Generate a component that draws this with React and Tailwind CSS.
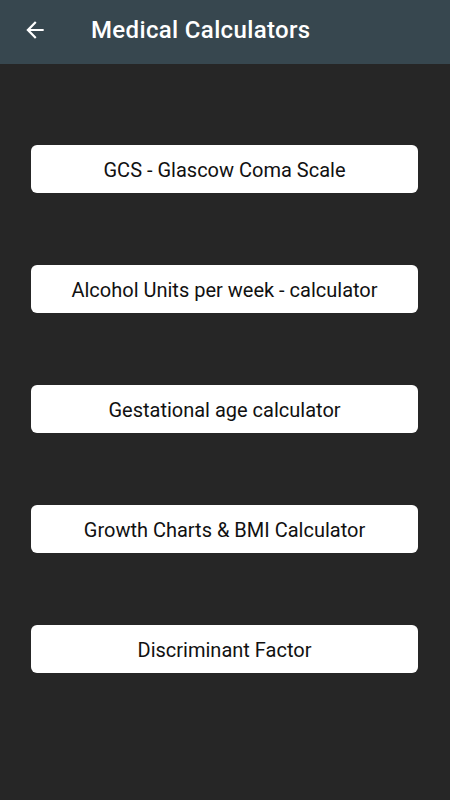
const items = [
  "GCS - Glascow Coma Scale",
  "Alcohol Units per week - calculator",
  "Gestational age calculator",
  "Growth Charts & BMI Calculator",
  "Discriminant Factor",
];

export default function App() {
  return (
    <div className="w-[450px] h-[800px] bg-[#262626] font-['Roboto',sans-serif] flex flex-col">
      <header className="h-16 bg-[#37474f] flex items-center pb-[4px]">
        <button className="ml-[22px] w-[26px] h-[26px] flex items-center justify-center text-white">
          {/* material arrow_back */}
          <svg width="26" height="26" viewBox="0 0 24 24" fill="currentColor">
            <path d="M20 11H7.83l5.59-5.59L12 4l-8 8 8 8 1.41-1.41L7.83 13H20v-2z" />
          </svg>
        </button>
        <h1 className="ml-[43px] text-white text-[24px] font-medium tracking-[0.35px]">Medical Calculators</h1>
      </header>
      <main className="flex flex-col gap-[72px] pt-[81px] pl-[31px] pr-[32px]">
        {items.map((label) => (
          <button
            key={label}
            className="h-12 w-full bg-white rounded-[6px] flex items-center justify-center pt-[1px] text-[#111] text-[20px] font-normal"
          >
            {label}
          </button>
        ))}
      </main>
    </div>
  );
}
